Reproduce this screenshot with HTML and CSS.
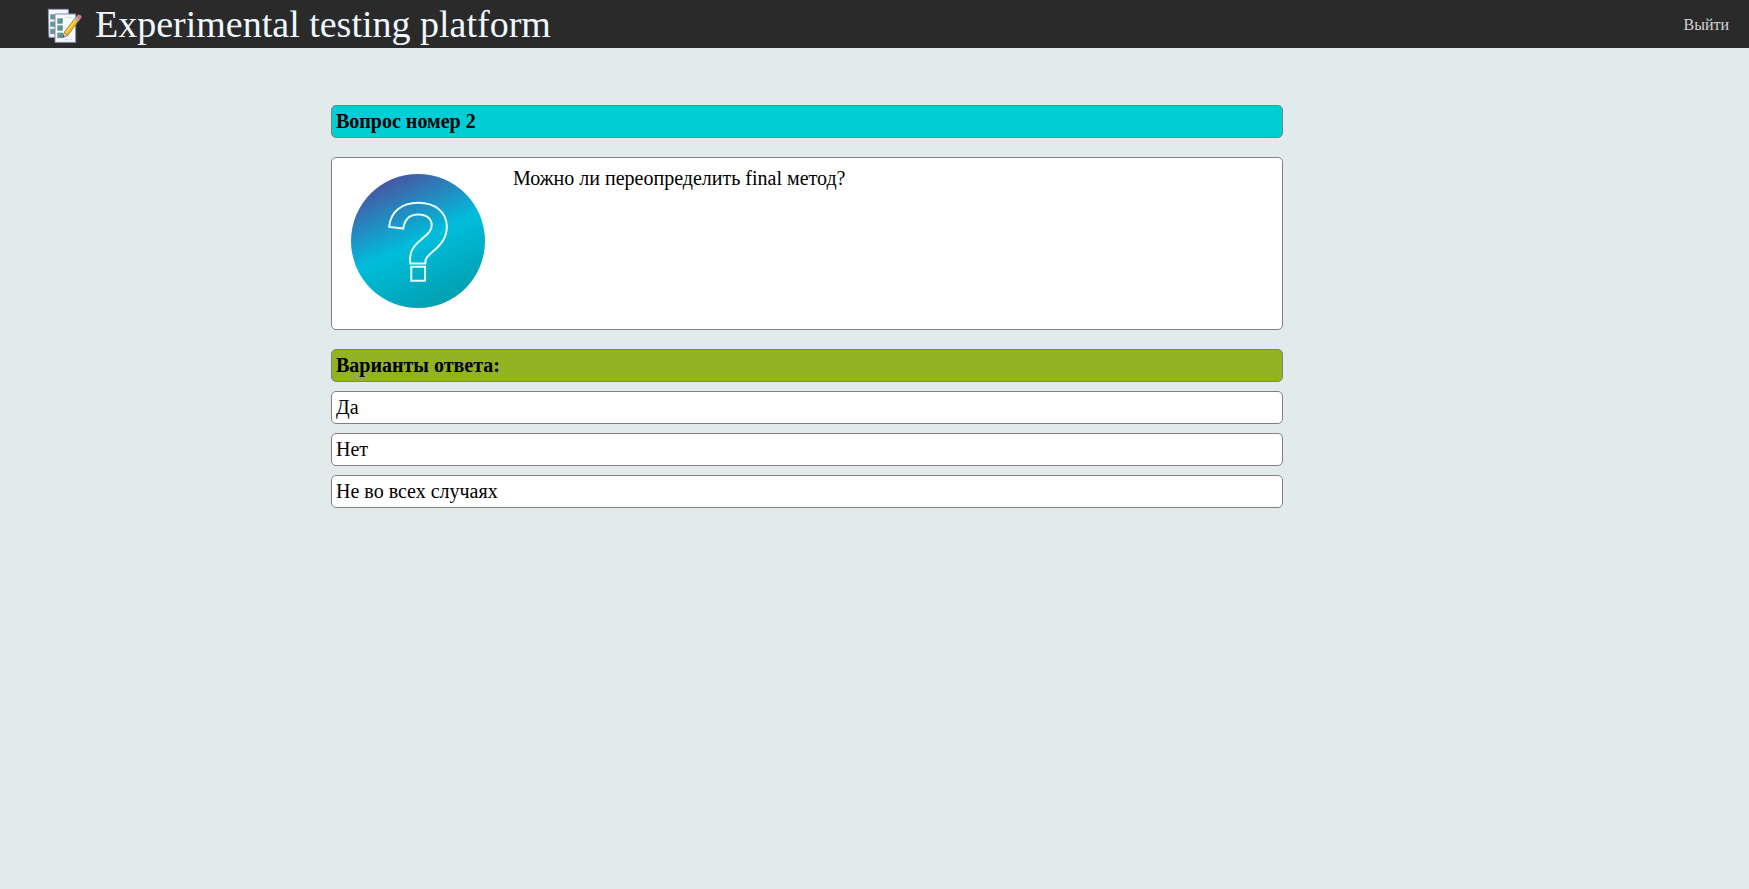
FILE: index.html
```html
<!DOCTYPE html>
<html lang="ru">
<head>
<meta charset="utf-8">
<title>Experimental testing platform</title>
<link rel="stylesheet" href="styles.css">
</head>
<body>
<header class="topbar">
  <svg class="logo" viewBox="0 0 108 108" aria-hidden="true">
    <path d="M4 4H64V88H6Z" fill="#f4f7fb" stroke="#9299c4" stroke-width="3"/>
    <path d="M11 20h13v13H11zM11 42h13v13H11zM11 64h13v13H11z" fill="#619f8d" stroke="#687aa0" stroke-width="2"/>
    <path d="M24 18H86V103H24Z" fill="#f7faff" stroke="#8389b8" stroke-width="3"/>
    <path d="M32 32h14v14H32zM32 53h14v14H32zM32 75h14v14H32z" fill="#62ad82" stroke="#537c91" stroke-width="2"/>
    <path d="M35 39l4 4 7-9M35 60l4 4 7-9M35 82l4 4 7-9" fill="none" stroke="#345b70" stroke-width="2"/>
    <path d="M53 28H76M53 94H76" stroke="#d4dcec" stroke-width="3"/>
    <path d="M47 88L52 72L62 83Z" fill="#f5d7ad" stroke="#655568" stroke-width="2"/>
    <path d="M52 72L84 31L94 40L62 83Z" fill="#eeb51c" stroke="#91702a" stroke-width="2"/>
    <path d="M56 75L88 34" stroke="#ffdc54" stroke-width="4"/>
    <path d="M84 31L89 25L99 34L94 40Z" fill="#bac0d3" stroke="#777891" stroke-width="2"/>
    <path d="M89 25Q94 17 100 22Q107 26 99 34Z" fill="#e8828f" stroke="#b66179" stroke-width="2"/>
    <path d="M46 89l3-9 5 5z" fill="#424052"/>
  </svg>
  <span class="brand">Experimental testing platform</span>
  <a class="logout" href="#">Выйти</a>
</header>
<main class="page">
  <div class="quiz">
    <h1 class="bar bar-question">Вопрос номер 2</h1>
    <section class="question">
      <svg class="question-icon" viewBox="93 72 400 400" aria-hidden="true">
        <defs>
          <linearGradient id="disc" gradientUnits="userSpaceOnUse" x1="200" y1="90" x2="373" y2="463">
            <stop offset="0" stop-color="#4856a4"/>
            <stop offset="0.5" stop-color="#00bddb"/>
            <stop offset="1" stop-color="#009fae"/>
          </linearGradient>
        </defs>
        <circle cx="293" cy="272" r="200" fill="url(#disc)"/>
        <path d="M207 230C210 185 244 158 294 158C344 158 379 186 379 229C379 258 367 278 339 302C319 319 314 325 315 339H270C267 309 274 291 302 268C324 250 334 241 334 225C334 206 319 193 294 193C268 193 253 207 249 235ZM273 349H314V391H273Z" fill="none" stroke="#e4ffff" stroke-width="6"/>
      </svg>
      <p class="question-text">Можно ли переопределить final метод?</p>
    </section>
    <h2 class="bar bar-answers">Варианты ответа:</h2>
    <div class="answers">
      <button class="bar answer" type="button">Да</button>
      <button class="bar answer" type="button">Нет</button>
      <button class="bar answer" type="button">Не во всех случаях</button>
    </div>
  </div>
</main>
</body>
</html>
```
FILE: styles.css
```css
* {
  box-sizing: border-box;
}

body {
  margin: 0;
  min-height: 100vh;
  background: #e2ebeb;
  color: #000;
  font-family: "Liberation Serif", "Times New Roman", serif;
  font-size: 20px;
  line-height: 23px;
}

.topbar {
  display: flex;
  align-items: center;
  padding: 0 20px 0 47px;
  background: #2a2a2a;
}

.logo {
  width: 36px;
  height: 36px;
  margin-top: 3px;
}

.brand {
  margin-left: 12px;
  color: #f0f8ff;
  font-size: 38px;
  line-height: 48px;
}

.logout {
  margin-left: auto;
  color: #d3d3d3;
  font-size: 16px;
  text-decoration: none;
}

.page {
  display: grid;
  grid-template-columns: 331fr 952fr 466fr;
  padding: 57px 0;
}

.quiz {
  grid-column: 2;
}

.bar {
  display: block;
  width: 100%;
  margin: 0;
  padding: 4px;
  border: 1px solid #808080;
  border-radius: 5px;
  font: inherit;
  color: inherit;
  text-align: left;
}

.bar-question {
  background: #00ced6;
  font-weight: bold;
}

.bar-answers {
  background: #92b322;
  font-weight: bold;
}

.question {
  display: flex;
  align-items: flex-start;
  gap: 28px;
  margin: 19px 0;
  padding: 9px 19px 21px;
  border: 1px solid #808080;
  border-radius: 5px;
  background: #fff;
}

.question-icon {
  flex: none;
  width: 134px;
  height: 134px;
  margin-top: 7px;
}

.question-text {
  margin: 0;
}

.answers {
  display: grid;
  gap: 9px;
  margin-top: 9px;
}

.answer {
  background: #fff;
  cursor: pointer;
}
```
